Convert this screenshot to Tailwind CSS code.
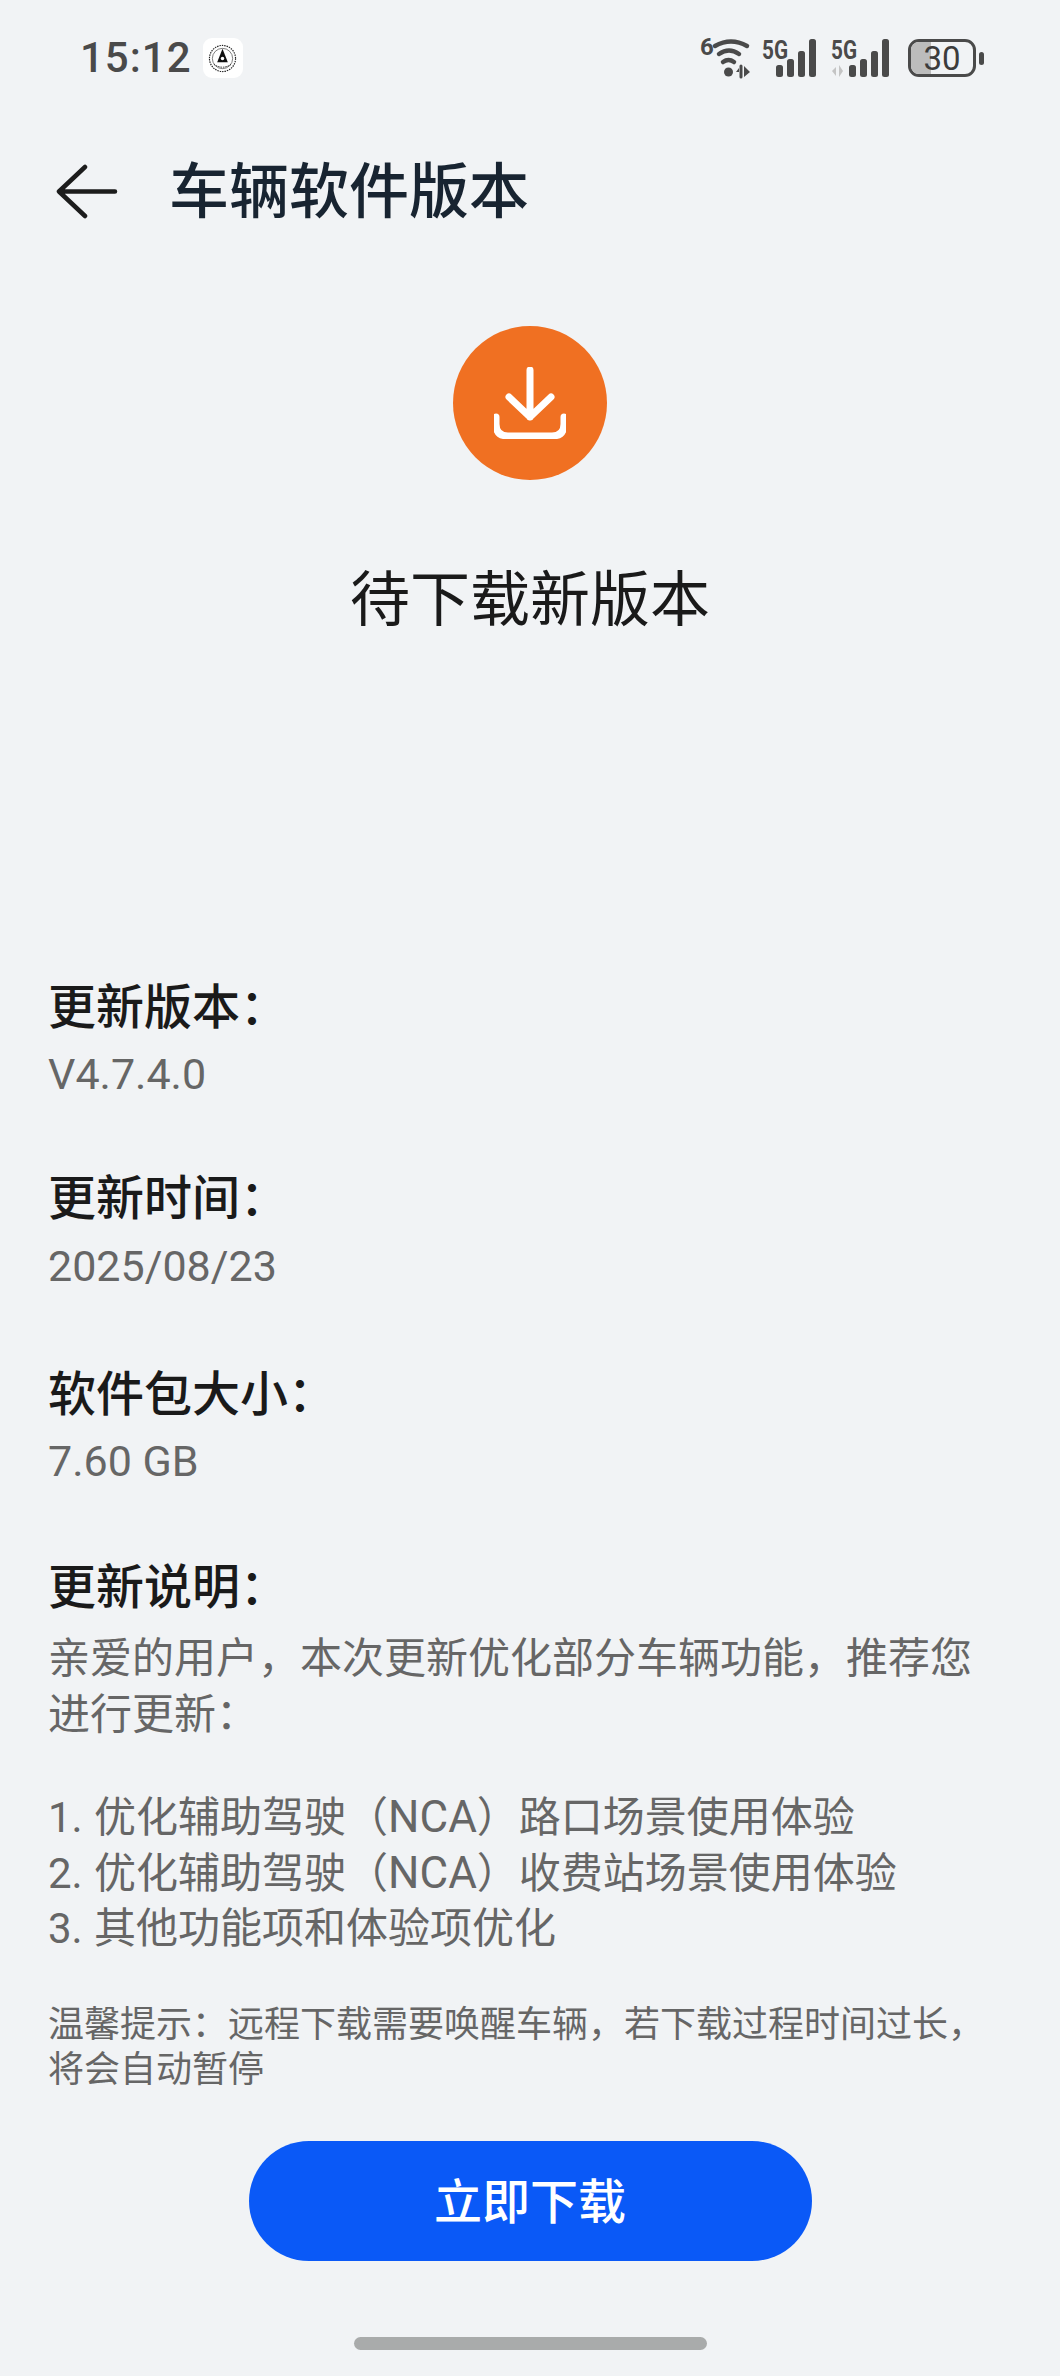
<!DOCTYPE html>
<html lang="zh-CN">
  <head>
    <meta charset="UTF-8" />
    <meta name="viewport" content="width=device-width, initial-scale=1.0" />
    <title>车辆软件版本</title>
    <script src="https://cdn.jsdelivr.net/npm/@tailwindcss/browser@4"></script>
  </head>
  <body class="bg-[#f1f3f5]">
    <main class="w-[1060px] h-[2376px] flex flex-col font-['Roboto','Noto_Sans_CJK_SC',sans-serif] overflow-hidden">
      <!-- status bar -->
      <div class="h-[116px] pl-[80px] pr-[76px] flex items-center justify-between">
        <div class="flex items-center">
          <span class="text-[42px] leading-none font-medium tracking-[1px] text-[#4a4a4a]">15:12</span>
          <span class="ml-[11px] w-[40px] h-[40px] rounded-[9px] bg-white flex items-center justify-center">
            <svg class="w-[29px] h-[29px]" viewBox="0 0 30 30" fill="none" stroke="#222">
              <circle cx="15" cy="15" r="13.5" stroke-width="1.2" stroke-dasharray="1.5 1" />
              <circle cx="15" cy="15" r="10.5" stroke-width="0.6" />
              <path d="M15 5 L20.500 19 H9.500 Z" fill="#111" stroke="none" />
              <circle cx="15" cy="15" r="1.8" fill="#fff" stroke="none" />
              <path d="M6 21q9 6 18 0" stroke-width="1" stroke-dasharray="1.5 1" />
            </svg>
          </span>
        </div>
        <div class="flex items-center text-[#4a4a4a]">
          <!-- wifi -->
          <svg class="w-[52px] h-[40px] overflow-visible" viewBox="0 0 52 40" fill="none" stroke="#4a4a4a" stroke-linecap="round">
            <text x="0" y="17" font-family="Roboto" font-size="24" font-weight="700" fill="#4a4a4a" stroke="none">6</text>
            <path d="M15 8Q31 -1 47 8" stroke-width="4.500" />
            <path d="M19 16Q29 9 39 16" stroke-width="4.500" />
            <path d="M23 24Q28.500 20 34 24" stroke-width="4.500" />
            <circle cx="28.500" cy="34" r="4.500" fill="#4a4a4a" stroke="none" />
            <path d="M41 28v11" stroke-width="3" />
            <path d="M36 34l3-4v4z M44 28v11l6-5z" fill="#4a4a4a" stroke="none" />
          </svg>
          <!-- sim 1 -->
          <svg class="ml-[10px] w-[58px] h-[40px] overflow-visible" viewBox="0 0 58 40" fill="#4a4a4a">
            <text x="0" y="21" font-family="Roboto" font-size="26" font-weight="700" textLength="26" lengthAdjust="spacingAndGlyphs">5G</text>
            <rect x="14" y="27" width="7" height="12" rx="2.500" />
            <rect x="25" y="21" width="7" height="18" rx="2.500" />
            <rect x="36" y="13" width="7" height="26" rx="2.500" />
            <rect x="47" y="1" width="7" height="38" rx="2.500" />
          </svg>
          <!-- sim 2 -->
          <svg class="ml-[11px] w-[62px] h-[40px] overflow-visible" viewBox="0 0 62 40" fill="#4a4a4a">
            <text x="0" y="21" font-family="Roboto" font-size="26" font-weight="700" textLength="26" lengthAdjust="spacingAndGlyphs">5G</text>
            <path d="M1 33l4-4v9z M8 27v12l4-6z" fill="#c4c4c4" />
            <rect x="18" y="27" width="7" height="12" rx="2.500" />
            <rect x="29" y="21" width="7" height="18" rx="2.500" />
            <rect x="40" y="13" width="7" height="26" rx="2.500" />
            <rect x="51" y="1" width="7" height="38" rx="2.500" />
          </svg>
          <!-- battery -->
          <div class="ml-[15px] flex items-center">
            <div class="relative w-[68px] h-[38px] rounded-[11px] border-[3px] border-[#4a4a4a] overflow-hidden">
              <div class="absolute inset-y-0 left-0 w-[20px] bg-[#bcbcbc]"></div>
              <span class="absolute inset-0 flex items-center justify-center text-[33px] leading-none text-[#3c3c3c]">30</span>
            </div>
            <div class="ml-[3px] w-[5px] h-[13px] rounded-full bg-[#4a4a4a]"></div>
          </div>
        </div>
      </div>

      <!-- title bar -->
      <div class="h-[154px] pl-[56px] flex items-center">
        <svg class="w-[62px] h-[56px] -mt-[3px]" viewBox="0 0 62 56" fill="none" stroke="#1c1c1c" stroke-width="4.500" stroke-linecap="round" stroke-linejoin="round">
          <path d="M29 3 L3 27.500 L29 52 M3 27.500 H59" />
        </svg>
        <h1 class="ml-[51px] text-[60px] leading-none font-medium text-[#182431]">车辆软件版本</h1>
      </div>

      <!-- state -->
      <div class="mt-[56px] flex flex-col items-center">
        <div class="w-[154px] h-[154px] rounded-full bg-[#f07022] flex items-center justify-center">
          <svg class="w-[72px] h-[72px]" viewBox="0 0 72 72" fill="none" stroke="#fff" stroke-width="7" stroke-linecap="round" stroke-linejoin="round">
            <path d="M36 3 V50 M15 30 L36 50 L57 30" />
            <path d="M2 50 V57 Q2 69 14 69 H58 Q70 69 70 57 V50" />
          </svg>
        </div>
        <h2 class="mt-[81px] text-[60px] leading-[80px] text-[#1a1a1a]">待下载新版本</h2>
      </div>

      <!-- details -->
      <section class="mt-[334px] px-[48px]">
        <div class="mb-[59px]">
          <h3 class="text-[48px] leading-[66px] font-medium text-[#1a1a1a]">更新版本：</h3>
          <p class="text-[43px] leading-[66px] text-[#666]">V4.7.4.0</p>
        </div>
        <div class="mb-[62px]">
          <h3 class="text-[48px] leading-[66px] font-medium text-[#1a1a1a]">更新时间：</h3>
          <p class="text-[43px] leading-[68px] text-[#666]">2025/08/23</p>
        </div>
        <div class="mb-[61px]">
          <h3 class="text-[48px] leading-[66px] font-medium text-[#1a1a1a]">软件包大小：</h3>
          <p class="text-[43px] leading-[66px] text-[#666]">7.60 GB</p>
        </div>
        <h3 class="text-[48px] leading-[66px] font-medium text-[#1a1a1a]">更新说明：</h3>
        <p class="mt-[10px] text-[42px] leading-[56px] text-[#666]">亲爱的用户，本次更新优化部分车辆功能，推荐您<br />进行更新：</p>
        <ol class="mt-[47px] text-[42px] leading-[55.500px] text-[#666] [word-spacing:1px]">
          <li>1. 优化辅助驾驶（<span class="text-[44px]">NCA</span>）路口场景使用体验</li>
          <li>2. 优化辅助驾驶（<span class="text-[44px]">NCA</span>）收费站场景使用体验</li>
          <li>3. 其他功能项和体验项优化</li>
        </ol>
        <p class="mt-[46px] text-[36px] leading-[45px] text-[#666]">温馨提示：远程下载需要唤醒车辆，若下载过程时间过长，<br />将会自动暂停</p>
      </section>

      <!-- action -->
      <button class="mt-[48px] mx-auto w-[563px] h-[120px] pt-[4px] rounded-full bg-[#0a59f7] text-white text-[48px] font-medium leading-none">立即下载</button>
      <div class="mt-[76px] mx-auto w-[353px] h-[13px] rounded-full bg-[#a9abab]"></div>
    </main>
  </body>
</html>
